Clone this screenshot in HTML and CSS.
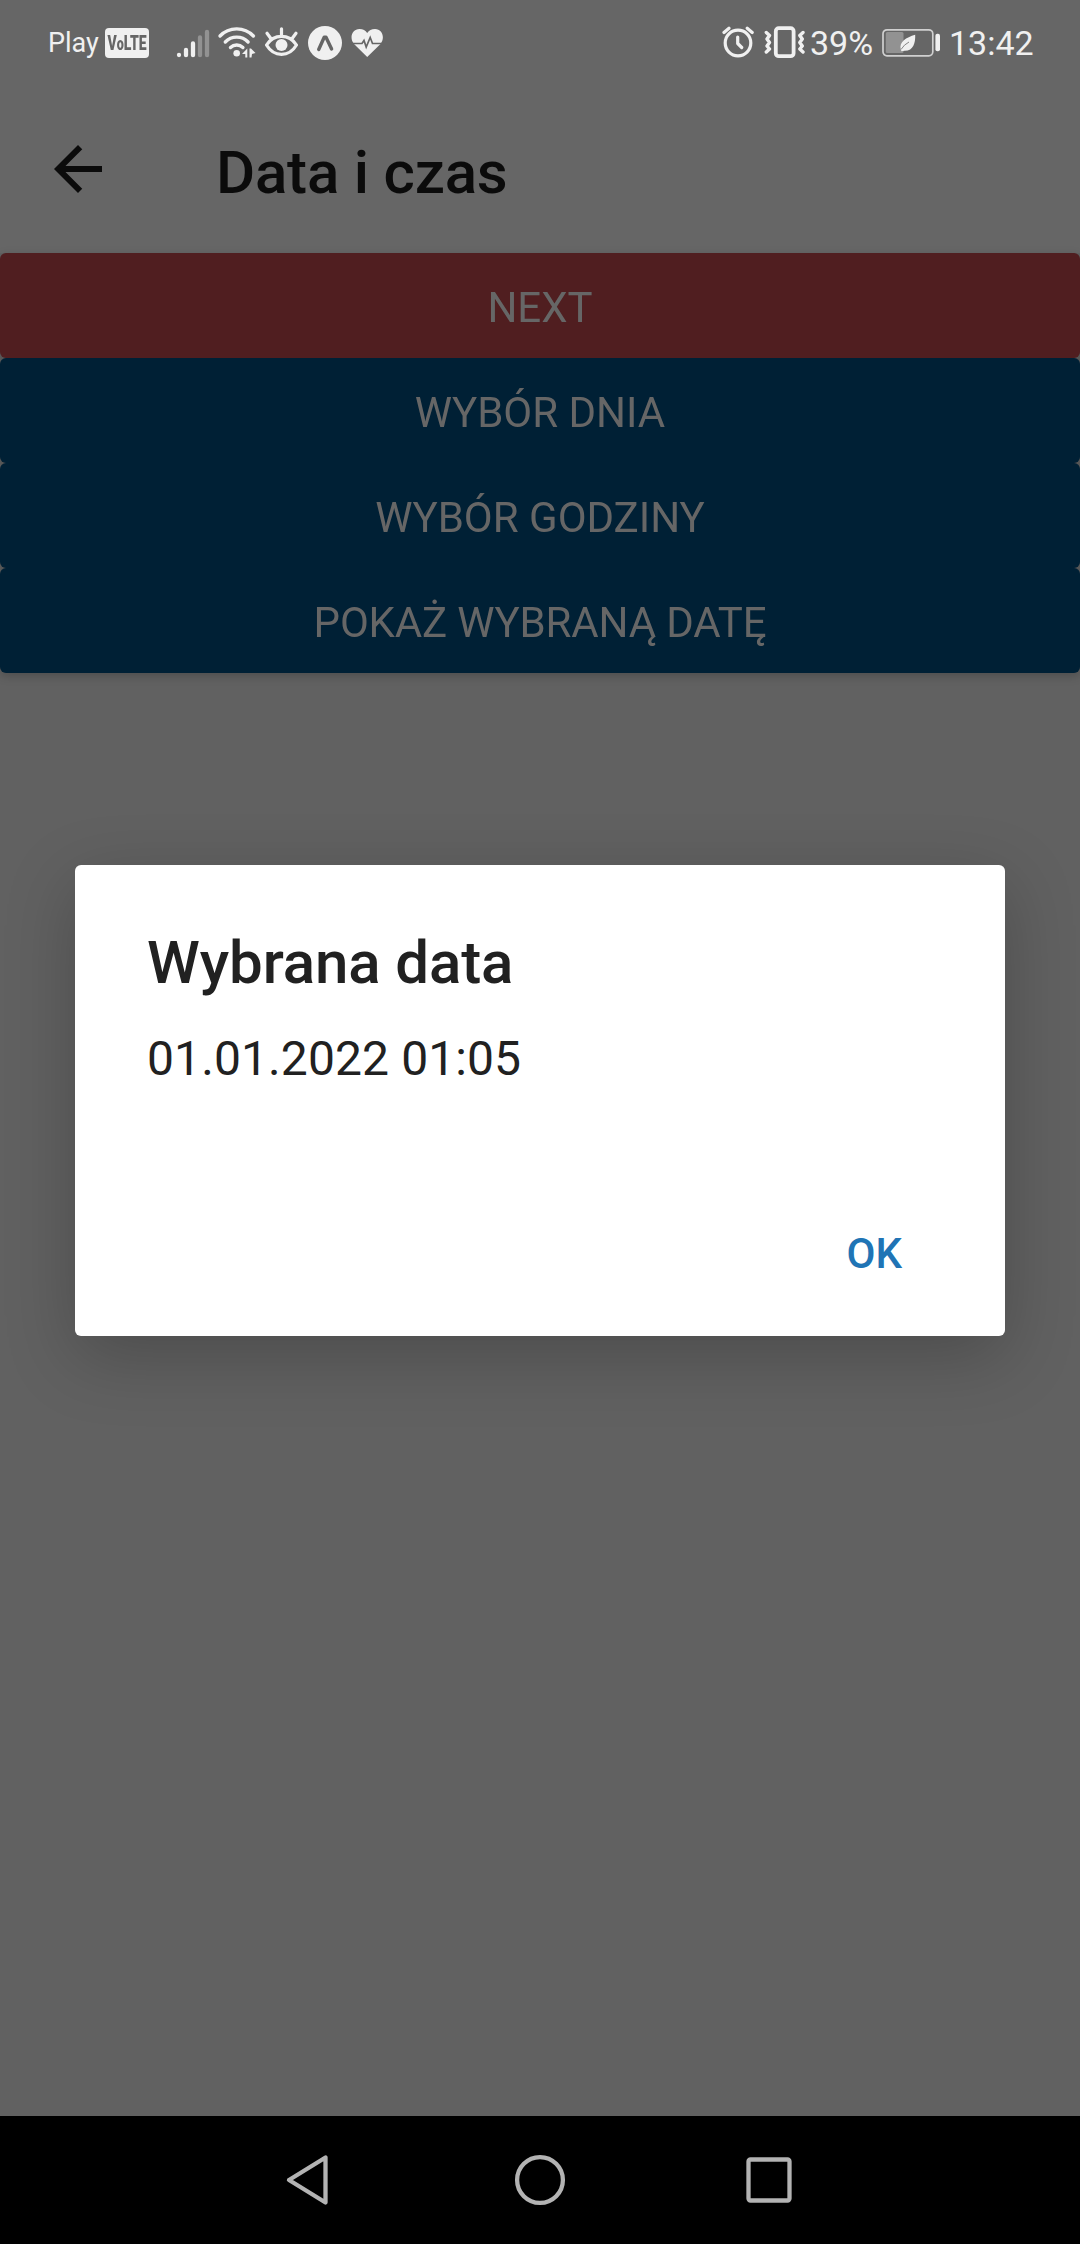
FILE: index.html
```html
<!DOCTYPE html>
<html lang="pl">
<head>
<meta charset="utf-8">
<title>Data i czas</title>
<link rel="stylesheet" href="styles.css">
</head>
<body>
<div class="screen">
  <div class="status">
    <span class="carrier">Play</span>
    <span class="volte"><span class="volte-text">V<small>o</small>LTE</span></span>
    <svg class="signal" width="34" height="40" viewBox="0 0 34 40" fill="none" stroke="#f0f0f0" stroke-width="4.3" stroke-linecap="round"><path d="M3 32v.1M10 27v5.2M17 20.5v11.7"/><path d="M24 14.5v17.7M31 9v23.2" stroke="#929292"/></svg>
    <svg class="wifi" width="40" height="40" viewBox="0 0 40 40" fill="none" stroke="#f0f0f0" stroke-width="3.4" stroke-linecap="round"><path d="M4 13C13 3.500 28.400 3.500 37.400 13M9.300 19C15.500 12.500 25.900 12.500 32.100 19M14.500 24.500C18 21.200 23.400 21.200 26.900 24.500"/><circle cx="20.700" cy="30.300" r="3.300" fill="#f0f0f0" stroke="none"/><path d="M26 31l5.300-5.500V34.500h-2V31zM33.500 25.500h1.500l4.500 4.500-3.500 1-.5 3.500h-2z" fill="#f0f0f0" stroke="none"/></svg>
    <svg class="eye" width="36" height="40" viewBox="0 0 36 40" fill="none" stroke="#f0f0f0" stroke-width="3.200" stroke-linecap="round" stroke-linejoin="round"><path d="M2.500 22C10 10.500 25 10.500 32.500 22C25 34.500 10 34.500 2.500 22zM17.500 5.800V12M3 10.300L6.500 15M32 10.300L28.500 15"/><circle cx="17.500" cy="22" r="6" fill="#f0f0f0" stroke="none"/></svg>
    <svg class="expo" width="34" height="40" viewBox="0 0 34 40"><circle cx="17" cy="20" r="17" fill="#f0f0f0"/><path d="M10.700 26.500L16.200 14.200h1.800L23.600 26" fill="none" stroke="#666" stroke-width="3.400" stroke-linecap="round" stroke-linejoin="round"/></svg>
    <svg class="heart" width="34" height="40" viewBox="0 0 34 40"><path d="M17.200 33.900L4 21C-1 15 2 6 9.500 6 13 6 15.500 7.500 17.200 10 19 7.500 21.500 6 25 6 32.500 6 35.300 15 30.500 21z" fill="#f0f0f0"/><path d="M1 20.500H12L14 17.500 16.200 24 20.200 14.500 22.500 20.500H34" fill="none" stroke="#666" stroke-width="1.700"/></svg>
    <span class="spacer"></span>
    <svg width="32" height="40" viewBox="0 0 32 40" fill="none" stroke="#f0f0f0" stroke-width="3.200" stroke-linecap="round" stroke-linejoin="round"><circle cx="16" cy="20" r="12.800"/><path d="M15.700 14v6.500l4 4M2 9.500L7 5.200M25.200 5.200L30.200 9.500"/></svg>
    <svg class="vibrate" width="42" height="40" viewBox="0 0 42 40" fill="none" stroke="#f0f0f0" stroke-width="3.400" stroke-linecap="round" stroke-linejoin="round"><rect x="11.800" y="5.200" width="17.800" height="28" rx="3" stroke-width="3.800"/><path d="M2.300 9.500L5.500 12.500 3 16 5.500 19.500 3 23 5.500 26 2.300 29M39 9.500L35.800 12.500 38.300 16 35.800 19.500 38.300 23 35.800 26 39 29"/></svg>
    <span class="percent">39%</span>
    <svg class="battery" width="59" height="40" viewBox="0 0 59 40"><rect x="1" y="6.800" width="49.800" height="26" rx="4" fill="none" stroke="#d0d0d0" stroke-width="1.700"/><rect x="3.800" y="9" width="17.700" height="21" rx="1.500" fill="#929292"/><rect x="53.400" y="10.800" width="4.600" height="17.400" rx="2" fill="#f0f0f0"/><path d="M33.200 11.800C33.500 20 31.500 28 22.500 27.800L19.500 28.200 18.800 26.500C17 19 24 14.500 33.200 11.800z" fill="#f0f0f0"/><path d="M19 26.500Q22 21.500 27 19" fill="none" stroke="#858585" stroke-width="1"/></svg>
    <span class="clock">13:42</span>
  </div>
  <header class="header">
    <svg width="72" height="72" viewBox="0 0 24 24" fill="#0b0b0b"><path d="M20 11H7.830l5.590-5.590L12 4l-8 8 8 8 1.410-1.410L7.830 13H20z"/></svg>
    <h1 class="title">Data i czas</h1>
  </header>
  <main class="content">
    <div class="buttons">
      <button class="button button-next">NEXT</button>
      <button class="button">WYBÓR DNIA</button>
      <button class="button">WYBÓR GODZINY</button>
      <button class="button button-long">POKAŻ WYBRANĄ DATĘ</button>
    </div>
  </main>
  <nav class="nav">
    <svg width="50" height="56" viewBox="0 0 50 56"><path d="M4 28L40.500 5.500V50.500z"/></svg>
    <svg width="56" height="56" viewBox="0 0 56 56"><circle cx="28" cy="28" r="22.900"/></svg>
    <svg width="50" height="56" viewBox="0 0 50 56"><rect x="3.500" y="7.500" width="41" height="41" rx="2"/></svg>
  </nav>
  <div class="overlay">
    <section class="dialog" role="alertdialog">
      <h2 class="dialog-title">Wybrana data</h2>
      <p class="dialog-text">01.01.2022 01:05</p>
      <div class="dialog-actions"><button class="ok">OK</button></div>
    </section>
  </div>
</div>
</body>
</html>
```
FILE: styles.css
```css
* { box-sizing: border-box; }
body { margin: 0; font-family: Roboto, sans-serif; }
svg { display: block; flex: none; }
button { border: 0; padding: 0; font: inherit; }

.screen {
  position: relative;
  display: flex;
  flex-direction: column;
  width: 1080px;
  height: 2244px;
  overflow: hidden;
  background: #616161;
}

.status {
  display: flex;
  align-items: center;
  height: 85px;
  padding: 1px 45px 0 48px;
  background: #666;
  color: #f0f0f0;
  white-space: nowrap;
}
.carrier { width: 57px; font-size: 27px; }
.volte {
  display: flex;
  align-items: center;
  justify-content: center;
  width: 44px;
  height: 30px;
  border-radius: 4px;
  background: #f0f0f0;
  color: #666;
}
.volte-text { font-size: 20px; line-height: 26px; font-weight: 900; transform: scaleX(.7); }
.volte-text small { font-size: 18px; }
.signal { margin-left: 27px; }
.wifi { margin-left: 6px; }
.eye { margin-left: 8px; }
.expo { margin-left: 8px; }
.heart { margin-left: 8px; }
.spacer { flex: 1; }
.vibrate { margin-left: 10px; }
.percent { width: 72px; margin-left: 4px; font-size: 34px; }
.battery { margin-right: 8px; }
.clock { width: 86px; font-size: 34px; }

.header {
  display: flex;
  align-items: center;
  height: 168px;
  padding-left: 42px;
  background: #666;
}
.title {
  margin: 0 0 0 102px;
  padding-top: 6px;
  font-size: 60px;
  font-weight: 500;
  letter-spacing: -.2px;
  color: #0b0b0b;
}

.content { flex: 1; }
.buttons {
  display: flex;
  flex-direction: column;
  filter: drop-shadow(0 3px 5px rgba(0, 0, 0, .2));
}
.button {
  height: 105px;
  padding-top: 3px;
  border-radius: 6px;
  background: #002035;
  font-size: 42px;
  color: #666;
}
.button-next { background: #501e20; }
.button-long { letter-spacing: -.15px; }

.nav {
  display: flex;
  align-items: center;
  justify-content: center;
  gap: 177px;
  height: 128px;
  background: #000;
}
.nav svg { fill: none; stroke: #b3b3b3; stroke-width: 4.300; stroke-linejoin: round; }

.overlay {
  position: absolute;
  inset: 85px 0 128px;
  display: flex;
  align-items: center;
  justify-content: center;
}
.dialog {
  display: flex;
  flex-direction: column;
  width: 930px;
  height: 471px;
  padding: 60px 72px;
  border-radius: 6px;
  background: #fff;
  box-shadow: 0 20px 70px rgba(0, 0, 0, .22);
  color: #212121;
}
.dialog-title { margin: 0; font-size: 60px; line-height: 76px; font-weight: 500; letter-spacing: -.1px; }
.dialog-text { margin: 28px 0 0; font-size: 48px; line-height: 60px; letter-spacing: .1px; }
.dialog-actions { display: flex; justify-content: flex-end; margin-top: 135px; padding-right: 31px; }
.ok { background: none; font-size: 42px; font-weight: 500; line-height: 60px; color: #2074b5; }
```
